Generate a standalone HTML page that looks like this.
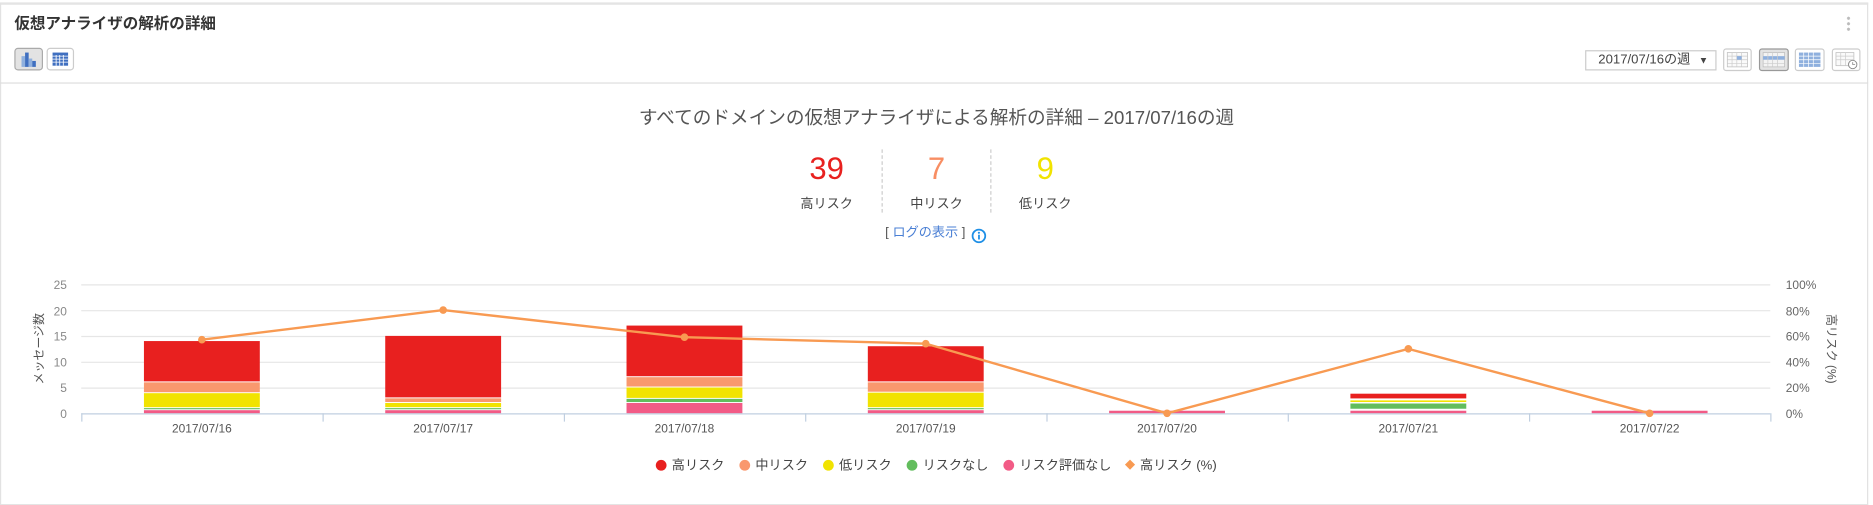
<!DOCTYPE html>
<html><head><meta charset="utf-8"><style>
html,body{margin:0;padding:0;background:#fff;overflow:hidden;width:1873px;height:505px}
#w{position:absolute;left:0;top:0;width:1568px;height:423px;transform:scale(1.19452);transform-origin:0 0;font-family:"Liberation Sans","Noto Sans CJK JP",sans-serif;color:#333}
.card{position:absolute;left:0;top:2px;width:1562px;height:418px;border:1px solid #e2e2e2;border-top:2px solid #e4e4e4;background:#fff}
.abs{position:absolute}
.btn{position:absolute;border:1px solid #ccc;border-radius:3px;background:#fff;box-sizing:border-box}
</style></head><body><div id="w">
<div class="card"></div>
<div class="abs" style="left:12px;top:9px;font-size:13px;font-weight:bold;color:#333">仮想アナライザの解析の詳細</div>
<div class="btn" style="left:12px;top:40px;width:24px;height:19px;background:#e3e3e3;border-color:#aaa"></div>
<svg class="abs" style="left:12px;top:40px" width="24" height="19"><rect x="6" y="7" width="3" height="9" fill="#8fb0de"/><rect x="9" y="4" width="3" height="12" fill="#3f6fc0"/><rect x="12" y="9" width="3" height="7" fill="#8fb0de"/><rect x="15" y="11" width="3" height="5" fill="#3f6fc0"/></svg>
<div class="btn" style="left:39px;top:40px;width:23px;height:19px"></div>
<svg class="abs" style="left:39px;top:40px" width="23" height="19"><rect x="5" y="4" width="13" height="11" fill="#3f6fc0"/><path d="M5 7H18M5 9.5H18M5 12H18M8 6V15M11 6V15M14 6V15" stroke="#fff" stroke-width="0.7"/></svg>
<div class="abs" style="left:0;top:69px;width:1564px;height:1px;background:#ddd"></div>
<div class="abs" style="left:1546px;top:13px;width:3px;height:14px;background:radial-gradient(circle,#bbb 1.2px,transparent 1.4px) 0 0/3px 4.6px"></div>
<div class="abs" style="left:1327px;top:42px;width:110px;height:17px;border:1px solid #ccc;box-sizing:border-box;font-size:11px;line-height:15px;padding-left:10px;color:#444">2017/07/16の週<span style="position:absolute;right:6px;font-size:8px">▼</span></div>
<svg class="abs" style="left:1442px;top:40px" width="116" height="20">
<rect x="1" y="1" width="23" height="18" rx="2" fill="#fff" stroke="#ccc"/><rect x="4" y="4" width="17" height="12" fill="#fafafa" stroke="#bbb" stroke-width=".6"/><path d="M4 7H21M4 10H21M4 13H21M8 4V16M12 4V16M16 4V16" stroke="#ccc" stroke-width=".6"/><rect x="12" y="7" width="4" height="3" fill="#8fb0de"/>
<rect x="31" y="1" width="24" height="18" rx="2" fill="#e3e3e3" stroke="#999"/><rect x="34" y="4" width="18" height="12" fill="#f3f3f3" stroke="#bbb" stroke-width=".6"/><rect x="34" y="7" width="18" height="3" fill="#8fb0de"/><path d="M34 13H52M38 4V16M42 4V16M46 4V16" stroke="#ccc" stroke-width=".6"/>
<rect x="61" y="1" width="24" height="18" rx="2" fill="#fff" stroke="#ccc"/><rect x="64" y="4" width="18" height="12" fill="#8fb0de"/><path d="M64 7H82M64 10H82M64 13H82M68 4V16M72 4V16M76 4V16" stroke="#fff" stroke-width=".6"/>
<rect x="92" y="1" width="23" height="18" rx="2" fill="#fff" stroke="#ccc"/><rect x="95" y="4" width="15" height="11" fill="#fafafa" stroke="#bbb" stroke-width=".6"/><path d="M95 7H110M95 10H110M99 4V15M103 4V15" stroke="#ccc" stroke-width=".6"/><circle cx="109" cy="14" r="3.5" fill="#fff" stroke="#888" stroke-width=".8"/><path d="M109 12V14H111" stroke="#888" stroke-width=".7" fill="none"/>
</svg>
<div class="abs" style="left:0;width:1568px;top:87px;text-align:center;font-size:15.6px;color:#555">すべてのドメインの仮想アナライザによる解析の詳細 – 2017/07/16の週</div>
<div class="abs" style="left:647px;top:124px;width:90px;text-align:center"><div style="font-size:26px;color:#e8211f;line-height:34px">39</div><div style="font-size:11px;color:#444;margin-top:4px">高リスク</div></div>
<div class="abs" style="left:738px;top:125px;height:53px;border-left:1px dashed #ccc"></div>
<div class="abs" style="left:739px;top:124px;width:90px;text-align:center"><div style="font-size:26px;color:#f88e63;line-height:34px">7</div><div style="font-size:11px;color:#444;margin-top:4px">中リスク</div></div>
<div class="abs" style="left:829px;top:125px;height:53px;border-left:1px dashed #ccc"></div>
<div class="abs" style="left:830px;top:124px;width:90px;text-align:center"><div style="font-size:26px;color:#f1e300;line-height:34px">9</div><div style="font-size:11px;color:#444;margin-top:4px">低リスク</div></div>
<div class="abs" style="left:741px;top:186px;font-size:11px;color:#555">[ <span style="color:#4a7fd4">ログの表示</span> ]</div>
<svg class="abs" style="left:813px;top:191px" width="13" height="13"><circle cx="6.5" cy="6.5" r="5.3" fill="#fff" stroke="#1e8fe6" stroke-width="1.5"/><rect x="5.8" y="5.5" width="1.5" height="4" fill="#1e8fe6"/><circle cx="6.5" cy="3.9" r=".9" fill="#1e8fe6"/></svg>
<svg class="abs" style="left:0;top:225px" width="1568" height="180" font-family="Liberation Sans,Noto Sans CJK JP,sans-serif">
<g transform="translate(0,-225)">
<g stroke="#e6e6e6"><path d="M68 238.5H1482M68 260.1H1482M68 281.7H1482M68 303.3H1482M68 324.9H1482"/></g>
<g font-size="10" fill="#888" text-anchor="end"><text x="56" y="242">25</text><text x="56" y="264">20</text><text x="56" y="285">15</text><text x="56" y="307">10</text><text x="56" y="328">5</text><text x="56" y="350">0</text></g>
<g font-size="10" fill="#666"><text x="1495" y="242">100%</text><text x="1495" y="264">80%</text><text x="1495" y="285">60%</text><text x="1495" y="307">40%</text><text x="1495" y="328">20%</text><text x="1495" y="350">0%</text></g>
<text transform="translate(36,292) rotate(-90)" font-size="10" fill="#555" text-anchor="middle">メッセージ数</text>
<text transform="translate(1530,292) rotate(90)" font-size="10" fill="#555" text-anchor="middle">高リスク (%)</text>
<g id="bars"></g>
<path d="M68 346.5H1482" stroke="#c0cfe0"/>
<g stroke="#c0cfe0"><path d="M68.5 346V353M270.5 346V353M472.5 346V353M674.5 346V353M876.5 346V353M1078.5 346V353M1280.5 346V353M1482.5 346V353"/></g>
<g font-size="10" fill="#555" text-anchor="middle"><text x="169" y="362">2017/07/16</text><text x="371" y="362">2017/07/17</text><text x="573" y="362">2017/07/18</text><text x="775" y="362">2017/07/19</text><text x="977" y="362">2017/07/20</text><text x="1179" y="362">2017/07/21</text><text x="1381" y="362">2017/07/22</text></g>
<polyline points="169,284.4 371,259.6 573,282.3 775,287.7 977,346 1179,292 1381,346" fill="none" stroke="#f89a52" stroke-width="2"/>
<g fill="#f89a52"><circle cx="169" cy="284.4" r="3.2"/><circle cx="371" cy="259.6" r="3.2"/><circle cx="573" cy="282.3" r="3.2"/><circle cx="775" cy="287.7" r="3.2"/><circle cx="977" cy="346" r="3.2"/><circle cx="1179" cy="292" r="3.2"/><circle cx="1381" cy="346" r="3.2"/></g>
</g></svg>
<script>
var d=[[[0,.6,'#f25b86'],[.6,1,'#62bd5d'],[1,3.9,'#f1e300'],[3.9,6,'#f9986e'],[6,14,'#e8201f']],
[[0,.6,'#f25b86'],[.6,1,'#62bd5d'],[1,2,'#f1e300'],[2,2.9,'#f9986e'],[2.9,15,'#e8201f']],
[[0,2,'#f25b86'],[2,2.8,'#62bd5d'],[2.8,5,'#f1e300'],[5,7,'#f9986e'],[7,17,'#e8201f']],
[[0,.6,'#f25b86'],[.6,1,'#62bd5d'],[1,4,'#f1e300'],[4,6,'#f9986e'],[6,13,'#e8201f']],
[[0,.5,'#f25b86']],
[[0,.5,'#f25b86'],[.7,1.9,'#62bd5d'],[2,2.5,'#f1e300'],[2.7,3.8,'#e8201f']],
[[0,.5,'#f25b86']]];
var s='';d.forEach(function(b,i){var cx=169+202*i;b.forEach(function(g){var y1=346-g[1]*4.32,y0=346-g[0]*4.32;var h=y0-y1-(g[0]>0?0.8:0);s+='<rect x="'+(cx-48.5)+'" y="'+y1+'" width="97" height="'+Math.max(h,0.8)+'" fill="'+g[2]+'"/>';});});
document.getElementById('bars').innerHTML=s;
</script>
<div class="abs" style="left:0;width:1568px;top:381px;display:flex;justify-content:center;font-size:11px;color:#444;gap:13px">
<span><span style="display:inline-block;width:9px;height:9px;border-radius:50%;background:#e8201f;vertical-align:-1px;margin-right:4px"></span>高リスク</span>
<span><span style="display:inline-block;width:9px;height:9px;border-radius:50%;background:#f9986e;vertical-align:-1px;margin-right:4px"></span>中リスク</span>
<span><span style="display:inline-block;width:9px;height:9px;border-radius:50%;background:#f1e300;vertical-align:-1px;margin-right:4px"></span>低リスク</span>
<span><span style="display:inline-block;width:9px;height:9px;border-radius:50%;background:#62bd5d;vertical-align:-1px;margin-right:4px"></span>リスクなし</span>
<span><span style="display:inline-block;width:9px;height:9px;border-radius:50%;background:#f25b86;vertical-align:-1px;margin-right:4px"></span>リスク評価なし</span>
<span><span style="display:inline-block;width:6px;height:6px;transform:rotate(45deg);background:#f89a52;vertical-align:1px;margin-right:5px"></span>高リスク (%)</span>
</div>
</div></body></html>
